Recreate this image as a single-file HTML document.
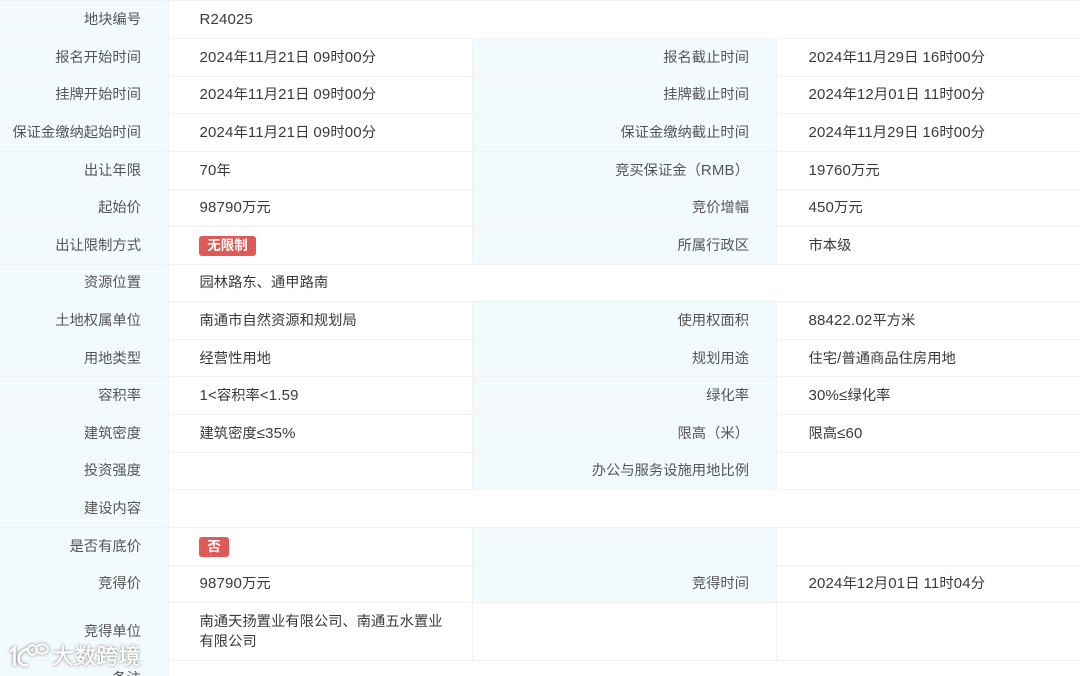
<!DOCTYPE html>
<html><head><meta charset="utf-8"><style>
html,body{margin:0;padding:0;background:#fff}
#p{position:relative;width:1080px;height:676px;overflow:hidden;background:#fff;font:14.3px/20px "Liberation Sans","Noto Sans CJK SC",sans-serif;color:#3a3a3a;filter:blur(.3px)}
.bg{position:absolute;background:#f3fafe}
.h{position:absolute;left:0;width:1080px;height:1px;background:#f0f2f5}
.v{position:absolute;width:1px;background:#f0f2f5}
.l,.t{position:absolute;white-space:nowrap;height:20px}
.l{color:#555;text-align:right}
.a{left:0;width:141px}
.c{left:473px;width:276px}
.b{left:199.5px}
.d{left:808.5px}
i{font-style:normal;font-size:15px;letter-spacing:.17px}
.tag{position:absolute;left:199px;background:#dd5a56;color:#fff;font-weight:bold;border-radius:3px;height:20px;text-align:center;font-size:13.5px;line-height:20px}
.wm{position:absolute;left:52px;top:645px;color:#fff;font-size:22px;line-height:24px;letter-spacing:.2px;-webkit-text-stroke:.4px #fff;text-shadow:0 0 3px #777,0 0 1px #777;white-space:nowrap}
</style></head><body><div id="p">
<div class="bg" style="left:0;top:1px;width:168px;height:675px"></div>
<div class="bg" style="left:473px;top:39px;width:303px;height:225px"></div>
<div class="bg" style="left:473px;top:302px;width:303px;height:188px"></div>
<div class="bg" style="left:473px;top:528px;width:303px;height:74px"></div>

<div class="h" style="top:0"></div><div class="h" style="top:38px"></div><div class="h" style="top:76px"></div><div class="h" style="top:113px"></div><div class="h" style="top:151px"></div><div class="h" style="top:189px"></div><div class="h" style="top:226px"></div><div class="h" style="top:264px"></div><div class="h" style="top:301px"></div><div class="h" style="top:339px"></div><div class="h" style="top:376px"></div><div class="h" style="top:414px"></div><div class="h" style="top:452px"></div><div class="h" style="top:489px"></div><div class="h" style="top:527px"></div><div class="h" style="top:565px"></div><div class="h" style="top:602px"></div><div class="h" style="top:660px"></div>

<div class="v" style="left:168px;top:0;height:676px"></div>
<div class="v" style="left:472px;top:38px;height:226px"></div>
<div class="v" style="left:776px;top:38px;height:226px"></div>
<div class="v" style="left:472px;top:301px;height:189px"></div>
<div class="v" style="left:776px;top:301px;height:189px"></div>
<div class="v" style="left:472px;top:527px;height:133px"></div>
<div class="v" style="left:776px;top:527px;height:133px"></div>

<div class="l a" style="top:10px">地块编号</div><div class="t b" style="top:10px"><i>R24025</i></div>
<div class="l a" style="top:48px">报名开始时间</div><div class="t b" style="top:48px"><i>2024</i>年<i>11</i>月<i>21</i>日 <i>09</i>时<i>00</i>分</div><div class="l c" style="top:48px">报名截止时间</div><div class="t d" style="top:48px"><i>2024</i>年<i>11</i>月<i>29</i>日 <i>16</i>时<i>00</i>分</div>
<div class="l a" style="top:85px">挂牌开始时间</div><div class="t b" style="top:85px"><i>2024</i>年<i>11</i>月<i>21</i>日 <i>09</i>时<i>00</i>分</div><div class="l c" style="top:85px">挂牌截止时间</div><div class="t d" style="top:85px"><i>2024</i>年<i>12</i>月<i>01</i>日 <i>11</i>时<i>00</i>分</div>
<div class="l a" style="top:123px">保证金缴纳起始时间</div><div class="t b" style="top:123px"><i>2024</i>年<i>11</i>月<i>21</i>日 <i>09</i>时<i>00</i>分</div><div class="l c" style="top:123px">保证金缴纳截止时间</div><div class="t d" style="top:123px"><i>2024</i>年<i>11</i>月<i>29</i>日 <i>16</i>时<i>00</i>分</div>
<div class="l a" style="top:161px">出让年限</div><div class="t b" style="top:161px"><i>70</i>年</div><div class="l c" style="top:161px">竞买保证金（<i>RMB</i>）</div><div class="t d" style="top:161px"><i>19760</i>万元</div>
<div class="l a" style="top:198px">起始价</div><div class="t b" style="top:198px"><i>98790</i>万元</div><div class="l c" style="top:198px">竞价增幅</div><div class="t d" style="top:198px"><i>450</i>万元</div>
<div class="l a" style="top:236px">出让限制方式</div><div class="tag" style="top:236px;width:57px">无限制</div><div class="l c" style="top:236px">所属行政区</div><div class="t d" style="top:236px">市本级</div>
<div class="l a" style="top:273px">资源位置</div><div class="t b" style="top:273px">园林路东、通甲路南</div>
<div class="l a" style="top:311px">土地权属单位</div><div class="t b" style="top:311px">南通市自然资源和规划局</div><div class="l c" style="top:311px">使用权面积</div><div class="t d" style="top:311px"><i>88422.02</i>平方米</div>
<div class="l a" style="top:349px">用地类型</div><div class="t b" style="top:349px">经营性用地</div><div class="l c" style="top:349px">规划用途</div><div class="t d" style="top:349px">住宅<i>/</i>普通商品住房用地</div>
<div class="l a" style="top:386px">容积率</div><div class="t b" style="top:386px"><i>1&lt;</i>容积率<i>&lt;1.59</i></div><div class="l c" style="top:386px">绿化率</div><div class="t d" style="top:386px"><i>30%≤</i>绿化率</div>
<div class="l a" style="top:424px">建筑密度</div><div class="t b" style="top:424px">建筑密度<i>≤35%</i></div><div class="l c" style="top:424px">限高（米）</div><div class="t d" style="top:424px">限高<i>≤60</i></div>
<div class="l a" style="top:461px">投资强度</div><div class="l c" style="top:461px">办公与服务设施用地比例</div>
<div class="l a" style="top:499px">建设内容</div>
<div class="l a" style="top:537px">是否有底价</div><div class="tag" style="top:537px;width:30px">否</div>
<div class="l a" style="top:574px">竞得价</div><div class="t b" style="top:574px"><i>98790</i>万元</div><div class="l c" style="top:574px">竞得时间</div><div class="t d" style="top:574px"><i>2024</i>年<i>12</i>月<i>01</i>日 <i>11</i>时<i>04</i>分</div>
<div class="l a" style="top:622px">竞得单位</div><div class="t b" style="top:612px">南通天扬置业有限公司、南通五水置业</div><div class="t b" style="top:632px">有限公司</div>
<div class="l a" style="top:669px">备注</div>

<svg style="position:absolute;left:8px;top:640px;filter:drop-shadow(0 0 1.5px #777)" width="44" height="30" viewBox="0 0 44 30" fill="none" stroke="#fff" stroke-width="2.6" stroke-linecap="round">
<path d="M3 11 L6.5 8 V25"/><path d="M19 9 C12 12 9.500 16 11 21 C12.500 24.500 15.500 26 19 25"/>
<ellipse cx="24.500" cy="10" rx="4.500" ry="4.800" stroke-width="1.900"/><ellipse cx="34" cy="9" rx="6" ry="4.600" stroke-width="1.900"/>
</svg>
<div class="wm">大数跨境</div>
</div></body></html>
